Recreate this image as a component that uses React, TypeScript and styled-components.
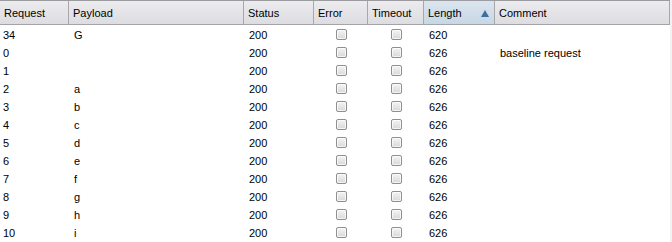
import React from 'react'
import styled, { createGlobalStyle } from 'styled-components'

const GlobalStyle = createGlobalStyle`
   html, body {
      margin: 0;
      padding: 0;
      background: #ffffff;
   }
   body {
      font-family: 'Liberation Sans', Arial, sans-serif;
      font-size: 11px;
      color: #000000;
   }
`

const COLUMNS = '69px 175px 70px 54px 56px 71px 175px'

interface Result {
   request: number
   payload: string
   status: number
   length: number
   comment?: string
}

const results: Result[] = [
   { request: 34, payload: 'G', status: 200, length: 620 },
   { request: 0, payload: '', status: 200, length: 626, comment: 'baseline request' },
   { request: 1, payload: '', status: 200, length: 626 },
   { request: 2, payload: 'a', status: 200, length: 626 },
   { request: 3, payload: 'b', status: 200, length: 626 },
   { request: 4, payload: 'c', status: 200, length: 626 },
   { request: 5, payload: 'd', status: 200, length: 626 },
   { request: 6, payload: 'e', status: 200, length: 626 },
   { request: 7, payload: 'f', status: 200, length: 626 },
   { request: 8, payload: 'g', status: 200, length: 626 },
   { request: 9, payload: 'h', status: 200, length: 626 },
   { request: 10, payload: 'i', status: 200, length: 626 },
]

const Frame = styled.div`
   display: flex;
   width: 672px;
   height: 242px;
   overflow: hidden;
`

const Table = styled.div`
   width: 670px;
   display: flex;
   flex-direction: column;
`

const Edge = styled.div`
   width: 2px;
   background: #f2f2f2;
`

const HeaderRow = styled.div`
   display: grid;
   grid-template-columns: ${COLUMNS};
   height: 25px;
   box-sizing: border-box;
   border-top: 1px solid #9c9ca0;
   border-bottom: 1px solid #a4a4a8;
`

const HeaderCell = styled.div<{ $sorted?: boolean }>`
   display: flex;
   align-items: center;
   justify-content: space-between;
   padding: 0 5px 0 4px;
   border-right: 1px solid #a8a8ac;
   background: ${(p) =>
      p.$sorted
         ? 'linear-gradient(#dbe6ef, #c6d7e5)'
         : 'linear-gradient(#ececef, #dddde1)'};
   white-space: nowrap;
`

const SortArrow = styled.span`
   width: 0;
   height: 0;
   border-left: 4px solid transparent;
   border-right: 4px solid transparent;
   border-bottom: 7px solid #3d6fa0;
   margin-top: 1px;
`

const Row = styled.div`
   display: grid;
   grid-template-columns: ${COLUMNS};
   height: 18px;
`

const Cell = styled.div<{ $center?: boolean }>`
   display: flex;
   align-items: center;
   justify-content: ${(p) => (p.$center ? 'center' : 'flex-start')};
   padding-left: ${(p) => (p.$center ? '0' : '5px')};
   padding-top: 1px;
   white-space: nowrap;
`

const FirstCell = styled(Cell)`
   padding-left: 3px;
`

const CheckBox = styled.span`
   display: block;
   width: 11px;
   height: 11px;
   box-sizing: border-box;
   border: 1px solid #8e8f8f;
   border-radius: 2px;
   background: linear-gradient(#f4f4f4, #d8d8d8);
   box-shadow: inset 0 0 0 1px rgba(255, 255, 255, 0.7);
`

export default function App() {
   return (
      <>
         <GlobalStyle />
         <Frame>
            <Table>
               <HeaderRow>
                  <HeaderCell>Request</HeaderCell>
                  <HeaderCell>Payload</HeaderCell>
                  <HeaderCell>Status</HeaderCell>
                  <HeaderCell>Error</HeaderCell>
                  <HeaderCell>Timeout</HeaderCell>
                  <HeaderCell $sorted>
                     Length
                     <SortArrow />
                  </HeaderCell>
                  <HeaderCell>Comment</HeaderCell>
               </HeaderRow>
               {results.map((r) => (
                  <Row key={r.request}>
                     <FirstCell>{r.request}</FirstCell>
                     <Cell>{r.payload}</Cell>
                     <Cell>{r.status}</Cell>
                     <Cell $center>
                        <CheckBox />
                     </Cell>
                     <Cell $center>
                        <CheckBox />
                     </Cell>
                     <Cell>{r.length}</Cell>
                     <Cell>{r.comment}</Cell>
                  </Row>
               ))}
            </Table>
            <Edge />
         </Frame>
      </>
   )
}
